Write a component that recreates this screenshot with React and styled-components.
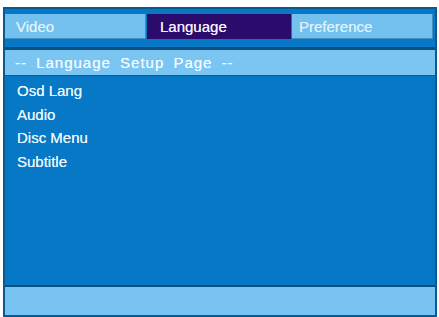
import React from 'react';
import styled, { createGlobalStyle } from 'styled-components';

const GlobalStyle = createGlobalStyle`
    html, body {
        margin : 0 ;
        padding : 0 ;
        background : #ffffff ;
        overflow : hidden ;
    }
    body {
        font-family : 'Liberation Sans', Arial, sans-serif ;
    }
`;

const Page = styled.div`
    width : 439px ;
    height : 317px ;
    padding : 7px 2px 0 3px ;
    box-sizing : border-box ;
`;

const Frame = styled.div`
    height : 310px ;
    box-sizing : border-box ;
    border : 2px solid #0b5a8f ;
    background : #0678c6 ;
    display : flex ;
    flex-direction : column ;
`;

const TabBar = styled.div`
    display : grid ;
    grid-template-columns : 141px 144px 141px ;
    column-gap : 1px ;
    padding : 5px 2px 8px 0 ;
`;

const Tab = styled.div`
    height : 25px ;
    display : flex ;
    align-items : center ;
    padding-left : ${props => props.$inset}px ;
    font-size : 15px ;
    background : ${props => props.$active ? '#2b0c6c' : '#74c1ef'} ;
    color : ${props => props.$active ? '#f4efff' : '#dcf0fc'} ;
    box-shadow : ${props => props.$active ? 'none' : 'inset -1px -1px 0 #3d8fc4'} ;
    text-shadow : 0 0 0.6px currentColor ;
    user-select : none ;
`;

const Header = styled.div`
    height : 25px ;
    border-top : 3px solid #0b4f80 ;
    border-bottom : 1px solid #0b5f98 ;
    background : #7ac5f2 ;
    color : #f2f9fe ;
    display : flex ;
    align-items : center ;
    padding-left : 10px ;
    font-size : 15px ;
    letter-spacing : 1px ;
    word-spacing : 4px ;
    white-space : pre ;
    text-shadow : 0 0 0.6px currentColor ;
`;

const List = styled.ul`
    flex : 1 ;
    list-style : none ;
    margin : 0 ;
    padding : 3px 0 0 12px ;
`;

const Item = styled.li`
    height : 23.5px ;
    line-height : 23.5px ;
    font-size : 15px ;
    color : #e8f5fd ;
    text-shadow : 0 0 0.6px currentColor ;
`;

const Footer = styled.div`
    height : 28px ;
    border-top : 2px solid #0b4f80 ;
    background : #78c3f1 ;
`;

const tabs = [
    { label : 'Video', inset : 11 },
    { label : 'Language', inset : 13, active : true },
    { label : 'Preference', inset : 7 },
];

const items = ['Osd Lang', 'Audio', 'Disc Menu', 'Subtitle'];

const App = () => (
    <>
        <GlobalStyle />
        <Page>
            <Frame>
                <TabBar>
                    {tabs.map(tab => (
                        <Tab key={tab.label} $inset={tab.inset} $active={tab.active}>
                            {tab.label}
                        </Tab>
                    ))}
                </TabBar>
                <Header>-- Language Setup Page --</Header>
                <List>
                    {items.map(item => <Item key={item}>{item}</Item>)}
                </List>
                <Footer />
            </Frame>
        </Page>
    </>
);

export default App;
